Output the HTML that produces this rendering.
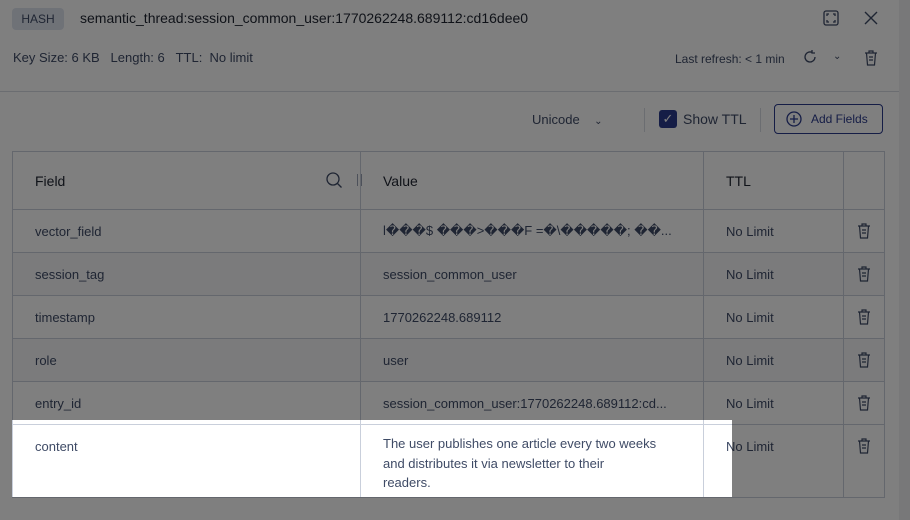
<!DOCTYPE html>
<html><head><style>
*{box-sizing:border-box;margin:0;padding:0}
body{width:910px;height:520px;overflow:hidden;background:#fff;font-family:"Liberation Sans",sans-serif;color:#3f4b66;position:relative;font-size:13px}
.abs{position:absolute}
.tag{left:12px;top:8px;width:52px;height:22px;background:#dfe5ef;border-radius:4px;color:#3f4b66;font-size:12px;line-height:22px;text-align:center}
.title{left:80px;top:10px;font-size:14px;color:#1f2430}
.meta{left:13px;top:50px;font-size:13px;color:#3f4b66}
.sep{left:0;top:91px;width:910px;height:1px;background:#d6dae2}
table{position:absolute;left:12px;top:151px;width:873px;border-collapse:collapse}
td{border:1px solid #c9cfdb;padding:0 0 0 22px;font-size:13px;color:#3f4b66;vertical-align:middle}
tr.h td{height:58px;font-size:14px;color:#1f2430}
tr.r td{height:43px}
tr.r:nth-child(odd) td{background:#f6f7f9}
.c td{height:73px;vertical-align:top;padding-top:14px;background:#fff}
.hl{left:12px;top:420px;width:720px;height:77px;box-shadow:0 0 0 3000px rgba(0,0,0,.5)}
.sb{left:899px;top:0;width:11px;height:520px;background:#f0f1f3}
</style></head><body>
<div class="abs tag">HASH</div>
<div class="abs title">semantic_thread:session_common_user:1770262248.689112:cd16dee0</div>
<svg class="abs" style="left:823px;top:10px" width="16" height="16" fill="none" stroke="#3f4b66" stroke-width="1.3"><rect x="1" y="1" width="14" height="14" rx="2"/><path d="M4 6V4h2M10 4h2v2M12 10v2h-2M6 12H4v-2"/></svg>
<svg class="abs" style="left:864px;top:11px" width="14" height="14" stroke="#3f4b66" stroke-width="1.4"><path d="M1 1l12 12M13 1L1 13"/></svg>
<div class="abs meta">Key Size: 6 KB &nbsp;&nbsp;Length: 6 &nbsp;&nbsp;TTL: &nbsp;No limit</div>
<div class="abs" style="left:675px;top:52px;font-size:12px">Last refresh: &lt; 1 min</div>
<svg class="abs" style="left:802px;top:49px" width="16" height="16" fill="none" stroke="#3f4b66" stroke-width="1.3"><path d="M13 8a5 5 0 1 1-3-4.6M10 1v3h3"/></svg>
<div class="abs" style="left:833px;top:51px;font-size:10px">⌄</div>
<svg class="abs" style="left:863px;top:49px" width="16" height="18" fill="none" stroke="#3f4b66" stroke-width="1.2"><path d="M2 4h12M6 4V2h4v2M3.5 4l1 12h7l1-12M6 8h4M6 11h4"/></svg>
<div class="abs sep"></div>
<div class="abs" style="left:532px;top:112px">Unicode &nbsp;&nbsp;&nbsp;<span style="font-size:10px">⌄</span></div>
<div class="abs" style="left:644px;top:108px;width:1px;height:24px;background:#d6dae2"></div>
<div class="abs" style="left:659px;top:110px;width:18px;height:18px;background:#2b3a8c;border-radius:3px;color:#fff;font-size:13px;text-align:center;line-height:18px">✓</div>
<div class="abs" style="left:683px;top:111px;font-size:14px">Show TTL</div>
<div class="abs" style="left:760px;top:108px;width:1px;height:24px;background:#d6dae2"></div>
<div class="abs" style="left:774px;top:104px;width:109px;height:30px;border:1px solid #2b3a8c;border-radius:4px;font-size:12px;line-height:28px;padding-left:36px;color:#2b3a8c">Add Fields</div>
<svg class="abs" style="left:786px;top:111px" width="16" height="16" fill="none" stroke="#2b3a8c" stroke-width="1.3"><circle cx="8" cy="8" r="7"/><path d="M8 4v8M4 8h8"/></svg>
<table>
<tr class="h"><td style="width:348px">Field</td><td style="width:343px">Value</td><td style="width:140px">TTL</td><td></td></tr>
<tr class="r"><td>vector_field</td><td>l���$ ���&gt;���F =�\�����; ��...</td><td>No Limit</td><td></td></tr>
<tr class="r"><td>session_tag</td><td>session_common_user</td><td>No Limit</td><td></td></tr>
<tr class="r"><td>timestamp</td><td>1770262248.689112</td><td>No Limit</td><td></td></tr>
<tr class="r"><td>role</td><td>user</td><td>No Limit</td><td></td></tr>
<tr class="r"><td>entry_id</td><td>session_common_user:1770262248.689112:cd...</td><td>No Limit</td><td></td></tr>
<tr class="c"><td style="padding-top:14px">content</td><td style="line-height:19.5px;padding-top:9px;white-space:nowrap">The user publishes one article every two weeks<br>and distributes it via newsletter to their<br>readers.</td><td>No Limit</td><td></td></tr>
</table>
<svg class="abs" style="left:325px;top:171px" width="18" height="18" fill="none" stroke="#3f4b66" stroke-width="1.3"><circle cx="8" cy="8" r="6"/><path d="M12.5 12.5l4 4"/></svg>
<div class="abs" style="left:357px;top:174px;width:1px;height:12px;background:#9aa3b5"></div>
<div class="abs" style="left:361px;top:174px;width:1px;height:12px;background:#9aa3b5"></div>
<svg class="abs" style="left:856px;top:222px" width="16" height="18" fill="none" stroke="#3f4b66" stroke-width="1.2"><path d="M2 4h12M6 4V2h4v2M3.5 4l1 12h7l1-12M6 8h4M6 11h4"/></svg>
<svg class="abs" style="left:856px;top:265px" width="16" height="18" fill="none" stroke="#3f4b66" stroke-width="1.2"><path d="M2 4h12M6 4V2h4v2M3.5 4l1 12h7l1-12M6 8h4M6 11h4"/></svg>
<svg class="abs" style="left:856px;top:308px" width="16" height="18" fill="none" stroke="#3f4b66" stroke-width="1.2"><path d="M2 4h12M6 4V2h4v2M3.5 4l1 12h7l1-12M6 8h4M6 11h4"/></svg>
<svg class="abs" style="left:856px;top:351px" width="16" height="18" fill="none" stroke="#3f4b66" stroke-width="1.2"><path d="M2 4h12M6 4V2h4v2M3.5 4l1 12h7l1-12M6 8h4M6 11h4"/></svg>
<svg class="abs" style="left:856px;top:394px" width="16" height="18" fill="none" stroke="#3f4b66" stroke-width="1.2"><path d="M2 4h12M6 4V2h4v2M3.5 4l1 12h7l1-12M6 8h4M6 11h4"/></svg>
<svg class="abs" style="left:856px;top:437px" width="16" height="18" fill="none" stroke="#3f4b66" stroke-width="1.2"><path d="M2 4h12M6 4V2h4v2M3.5 4l1 12h7l1-12M6 8h4M6 11h4"/></svg>
<div class="abs sb"></div>
<div class="abs hl"></div>
</body></html>
